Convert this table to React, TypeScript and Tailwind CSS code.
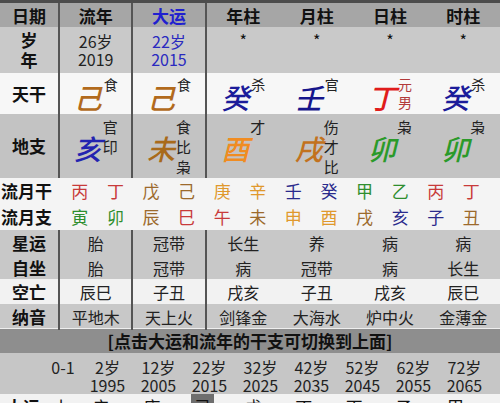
import type { ReactNode } from 'react'

type Pillar = { ch: string; color: string; sup: string[]; supColor?: string }

const line = 'border-r-2 border-[#555]'

const gan: Pillar[] = [
  { ch: '己', color: 'text-[#b26a1c]', sup: ['食'] },
  { ch: '己', color: 'text-[#b26a1c]', sup: ['食'] },
  { ch: '癸', color: 'text-[#1c1c9a]', sup: ['杀'] },
  { ch: '壬', color: 'text-[#16168c]', sup: ['官'] },
  { ch: '丁', color: 'text-[#e01c1c]', sup: ['元', '男'], supColor: 'text-[#b23a3a]' },
  { ch: '癸', color: 'text-[#1c1c9a]', sup: ['杀'] },
]

const zhi: Pillar[] = [
  { ch: '亥', color: 'text-[#2323b0]', sup: ['官', '印'] },
  { ch: '未', color: 'text-[#a86a1a]', sup: ['食', '比', '枭'] },
  { ch: '酉', color: 'text-[#f08c22]', sup: ['才'] },
  { ch: '戌', color: 'text-[#c2721e]', sup: ['伤', '才', '比'] },
  { ch: '卯', color: 'text-[#2a9a2a]', sup: ['枭'] },
  { ch: '卯', color: 'text-[#2a9a2a]', sup: ['枭'] },
]

const red = 'text-[#c83a3a]'
const brown = 'text-[#9c6a2c]'
const orange = 'text-[#e0982c]'
const navy = 'text-[#2a2a8c]'
const green = 'text-[#2e8e2e]'

const monthGan: [string, string][] = [
  ['丙', red], ['丁', red], ['戊', brown], ['己', brown], ['庚', orange], ['辛', orange],
  ['壬', navy], ['癸', navy], ['甲', green], ['乙', green], ['丙', red], ['丁', red],
]
const monthZhi: [string, string][] = [
  ['寅', green], ['卯', green], ['辰', brown], ['巳', red], ['午', red], ['未', brown],
  ['申', orange], ['酉', orange], ['戌', brown], ['亥', navy], ['子', navy], ['丑', brown],
]

const luck = [
  ['2岁', '1995'], ['12岁', '2005'], ['22岁', '2015'], ['32岁', '2025'],
  ['42岁', '2035'], ['52岁', '2045'], ['62岁', '2055'], ['72岁', '2065'],
]
const luckGan = ['辛', '庚', '己', '戊', '丁', '丙', '乙', '甲']

function Label({ children }: { children: ReactNode }) {
  return (
    <div className={`flex items-center justify-center text-[17px] font-bold ${line}`}>{children}</div>
  )
}

function TextRow({ bg, h, label, vals }: { bg: string; h: string; label: string; vals: string[] }) {
  return (
    <div className={`grid grid-cols-[60px_repeat(6,1fr)] ${bg} ${h}`}>
      <Label>{label}</Label>
      {vals.map((v, i) => (
        <div key={i} className={`flex items-center justify-center text-[16px] text-[#222] ${i < 2 ? line : ''}`}>
          {v}
        </div>
      ))}
    </div>
  )
}

function GanCell({ p, i }: { p: Pillar; i: number }) {
  return (
    <div className={`flex items-start justify-center pt-[9px] ${i < 2 ? line : ''}`}>
      <span className={`text-[28px] leading-[30px] font-medium italic ${p.color}`}>{p.ch}</span>
      <div className={`-mt-[7px] ml-[2px] flex flex-col text-[14px] leading-[18px] ${p.supColor ?? 'text-[#222]'}`}>
        {p.sup.map((s, k) => (
          <span key={k}>{s}</span>
        ))}
      </div>
    </div>
  )
}

function ZhiCell({ p, i }: { p: Pillar; i: number }) {
  return (
    <div className={`flex items-start justify-center pt-[3px] ${i < 2 ? line : ''}`}>
      <span className={`mt-[15px] text-[28px] leading-[32px] font-medium italic ${p.color}`}>{p.ch}</span>
      <div className="ml-[1px] flex flex-col text-[15px] leading-[20px] text-[#222]">
        {p.sup.map((s, k) => (
          <span key={k}>{s}</span>
        ))}
      </div>
    </div>
  )
}

function MonthRow({ label, items }: { label: string; items: [string, string][] }) {
  return (
    <div className="grid h-[26px] grid-cols-[62px_repeat(12,35.6px)] items-center bg-[#f4f4f4]">
      <div className="pl-[1px] text-[17px] font-bold">{label}</div>
      {items.map(([c, col], i) => (
        <div key={i} className={`text-center text-[17px] ${col}`}>{c}</div>
      ))}
    </div>
  )
}

export default function App() {
  return (
    <div className="h-[403px] w-[500px] overflow-hidden bg-[#f2f2f2] font-['Noto_Sans_CJK_SC',sans-serif] text-[#111]">
      <div className="border-t-[3px] border-[#4c4c4c]">
        {/* header */}
        <div className="grid h-[24px] grid-cols-[60px_repeat(6,1fr)] bg-[#a6a6a6] text-[17px] font-bold">
          <Label>日期</Label>
          <div className={`flex items-center justify-center ${line}`}>流年</div>
          <div className={`flex items-center justify-center text-[#2020d0] ${line}`}>大运</div>
          <div className="flex items-center justify-center">年柱</div>
          <div className="flex items-center justify-center">月柱</div>
          <div className="flex items-center justify-center">日柱</div>
          <div className="flex items-center justify-center">时柱</div>
        </div>

        {/* age / year */}
        <div className="grid h-[46px] grid-cols-[60px_repeat(6,1fr)] bg-[#c9c9c9]">
          <div className={`flex flex-col items-center justify-center text-[17px] leading-[20px] font-bold ${line}`}>
            <span>岁</span>
            <span>年</span>
          </div>
          <div className={`flex flex-col items-center justify-center text-[16px] leading-[18px] text-[#222] ${line}`}>
            <span>26岁</span>
            <span>2019</span>
          </div>
          <div className={`flex flex-col items-center justify-center text-[16px] leading-[18px] text-[#2a2ac0] ${line}`}>
            <span>22岁</span>
            <span>2015</span>
          </div>
          {[0, 1, 2, 3].map((k) => (
            <div key={k} className="pt-[4px] text-center text-[16px] leading-[18px]">*</div>
          ))}
        </div>

        {/* 天干 */}
        <div className="grid h-[41px] grid-cols-[60px_repeat(6,1fr)] bg-[#f7f7f7]">
          <Label>天干</Label>
          {gan.map((p, i) => (
            <GanCell key={i} p={p} i={i} />
          ))}
        </div>

        {/* 地支 */}
        <div className="grid h-[64px] grid-cols-[60px_repeat(6,1fr)] bg-[#c3c3c3]">
          <Label>地支</Label>
          {zhi.map((p, i) => (
            <ZhiCell key={i} p={p} i={i} />
          ))}
        </div>

        <MonthRow label="流月干" items={monthGan} />
        <MonthRow label="流月支" items={monthZhi} />

        <TextRow bg="bg-[#c8c8c8]" h="h-[25px]" label="星运" vals={['胎', '冠带', '长生', '养', '病', '病']} />
        <TextRow bg="bg-[#c8c8c8]" h="h-[24px]" label="自坐" vals={['胎', '冠带', '病', '冠带', '病', '长生']} />
        <TextRow bg="bg-[#f2f2f2]" h="h-[25px]" label="空亡" vals={['辰巳', '子丑', '戌亥', '子丑', '戌亥', '辰巳']} />
        <TextRow bg="bg-[#c8c8c8]" h="h-[24px]" label="纳音" vals={['平地木', '天上火', '剑锋金', '大海水', '炉中火', '金薄金']} />

        <div className="h-[1px] bg-[#eeeeee]" />

        <div className="flex h-[24px] items-center justify-center bg-[#8e8e8e] text-[17px] font-bold text-[#111]">
          [点击大运和流年的干支可切换到上面]
        </div>

        {/* luck periods */}
        <div className="grid h-[41px] grid-cols-[44px_38px_repeat(8,51px)] bg-[#c6c6c6] pt-[5px] text-[16px] leading-[18px] text-[#222]">
          <div />
          <div className="text-center">0-1</div>
          {luck.map(([a, y]) => (
            <div key={y} className="flex flex-col items-center">
              <span>{a}</span>
              <span>{y}</span>
            </div>
          ))}
        </div>

        <div className="grid h-[30px] grid-cols-[46px_30px_repeat(8,50.6px)] bg-[#f2f2f2] text-[17px] leading-[24px]">
          <div className="pt-[1px] text-center font-bold">大运</div>
          <div className="pt-[1px] text-center">小</div>
          {luckGan.map((c, i) => (
            <div key={i} className="flex justify-center">
              <span className={`w-[23px] pt-[1px] text-center ${i === 2 ? 'bg-[#6e6e6e]' : ''}`}>{c}</span>
            </div>
          ))}
        </div>
      </div>
    </div>
  )
}
